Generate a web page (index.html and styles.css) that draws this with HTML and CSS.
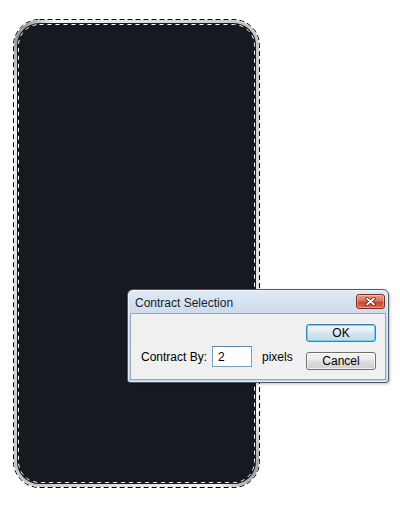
FILE: index.html
```html
<!DOCTYPE html>
<html lang="en">
<head>
    <meta charset="UTF-8">
    <meta name="viewport" content="width=device-width, initial-scale=1.0">
    <title>Contract Selection</title>
    <link rel="stylesheet" href="styles.css">
</head>
<body>
    <div class="canvas">
        <!-- phone shape with selection outlines -->
        <svg class="shape" width="250" height="472" viewBox="0 0 250 472">
            <defs>
                <linearGradient id="silver" x1="0" y1="0" x2="1" y2="1">
                    <stop offset="0" stop-color="#7a7a7a"/>
                    <stop offset="0.08" stop-color="#f2f2f2"/>
                    <stop offset="0.5" stop-color="#c4c4c4"/>
                    <stop offset="0.92" stop-color="#f4f4f4"/>
                    <stop offset="1" stop-color="#8a8a8a"/>
                </linearGradient>
            </defs>
            <rect x="1.5" y="1.5" width="246" height="468" rx="26" fill="none" stroke="#fff"/>
            <rect x="1.5" y="1.5" width="246" height="468" rx="26" fill="none" stroke="#000" stroke-dasharray="5 3"/>
            <rect x="3.5" y="3.5" width="242" height="464" rx="24" fill="#151920" stroke="url(#silver)" stroke-width="3"/>
            <rect x="6.5" y="6.5" width="236" height="458" rx="21" fill="none" stroke="#fff" stroke-dasharray="4 4"/>
        </svg>

        <div class="dialog">
            <div class="titlebar">
                <span class="title">Contract Selection</span>
                <span class="close">
                    <svg width="11" height="9" viewBox="0 0 11 9">
                        <path d="M2 1.5 L9 7.5 M9 1.5 L2 7.5" stroke="#5a1a10" stroke-width="3.4" stroke-linecap="round"/>
                        <path d="M2 1.5 L9 7.5 M9 1.5 L2 7.5" stroke="#fff" stroke-width="1.8" stroke-linecap="round"/>
                    </svg>
                </span>
            </div>
            <div class="panel">
                <div class="field">
                    <label for="amount">Contract By:</label>
                    <input type="text" id="amount" value="2">
                    <span class="unit">pixels</span>
                </div>
                <div class="buttons">
                    <button class="btn default">OK</button>
                    <button class="btn">Cancel</button>
                </div>
            </div>
        </div>
    </div>
</body>
</html>
```
FILE: styles.css
```css
body {
    margin: 0;
    background: #fff;
    font-family: "Liberation Sans", Arial, sans-serif;
    font-size: 12px;
    color: #000;
}
.canvas {
    position: relative;
    width: 400px;
    height: 511px;
    box-sizing: border-box;
    padding: 18px 0 0 12px;
}
.shape {
    display: block;
}
.dialog {
    position: absolute;
    left: 127px;
    top: 289px;
    width: 262px;
    height: 94px;
    box-sizing: border-box;
    border: 1px solid #505a66;
    border-radius: 6px 6px 3px 3px;
    background: linear-gradient(#e0eaf6, #c8d8ec 30%, #c2d4ea);
    box-shadow: inset 0 0 0 1px rgba(255, 255, 255, 0.55), 1px 1px 3px rgba(0, 0, 0, 0.25);
    padding: 0 2px 2px;
    display: flex;
    flex-direction: column;
}
.titlebar {
    height: 23px;
    display: flex;
    align-items: center;
    justify-content: space-between;
    padding-left: 5px;
}
.title {
    color: #1b1b1b;
    padding-top: 2px;
}
.close {
    width: 29px;
    height: 15px;
    box-sizing: border-box;
    align-self: flex-start;
    margin-top: 4px;
    margin-right: 1px;
    border: 1px solid #7e2a1e;
    border-radius: 3px;
    background: linear-gradient(#e6a393, #d7735f 45%, #c44a32 55%, #d66c4f);
    box-shadow: inset 0 0 0 1px rgba(255, 255, 255, 0.35);
    display: flex;
    align-items: center;
    justify-content: center;
}
.close svg {
    display: block;
}
.panel {
    flex: 1;
    background: #f0f0f0;
    border: 1px solid #93a9c4;
    display: flex;
    justify-content: space-between;
    padding: 10px 9px 0 10px;
}
.field {
    display: flex;
    align-items: center;
    height: 21px;
    margin-top: 22px;
}
.field input {
    width: 40px;
    height: 21px;
    box-sizing: border-box;
    margin: 0 0 0 5px;
    border: 1px solid #7b9ebd;
    border-top-color: #5d84a8;
    padding: 0 0 0 5px;
    font-family: inherit;
    font-size: 12px;
    background: #fff;
    outline: none;
}
.unit {
    margin-left: 10px;
}
.buttons {
    display: flex;
    flex-direction: column;
    gap: 10px;
}
.btn {
    width: 70px;
    height: 18px;
    box-sizing: border-box;
    padding: 0;
    border: 1px solid #707070;
    border-radius: 3px;
    background: linear-gradient(#f3f3f3, #ebebeb 45%, #dddddd 50%, #cfcfcf);
    box-shadow: inset 0 0 0 1px rgba(255, 255, 255, 0.7);
    font-family: inherit;
    font-size: 12px;
    color: #000;
    line-height: 16px;
}
.btn.default {
    border-color: #3c7fb1;
    box-shadow: inset 0 0 0 1px #6fd3f7;
    background: linear-gradient(#eef5fa, #e2edf5 45%, #d3e3ee 50%, #c8dbe8);
}
```
